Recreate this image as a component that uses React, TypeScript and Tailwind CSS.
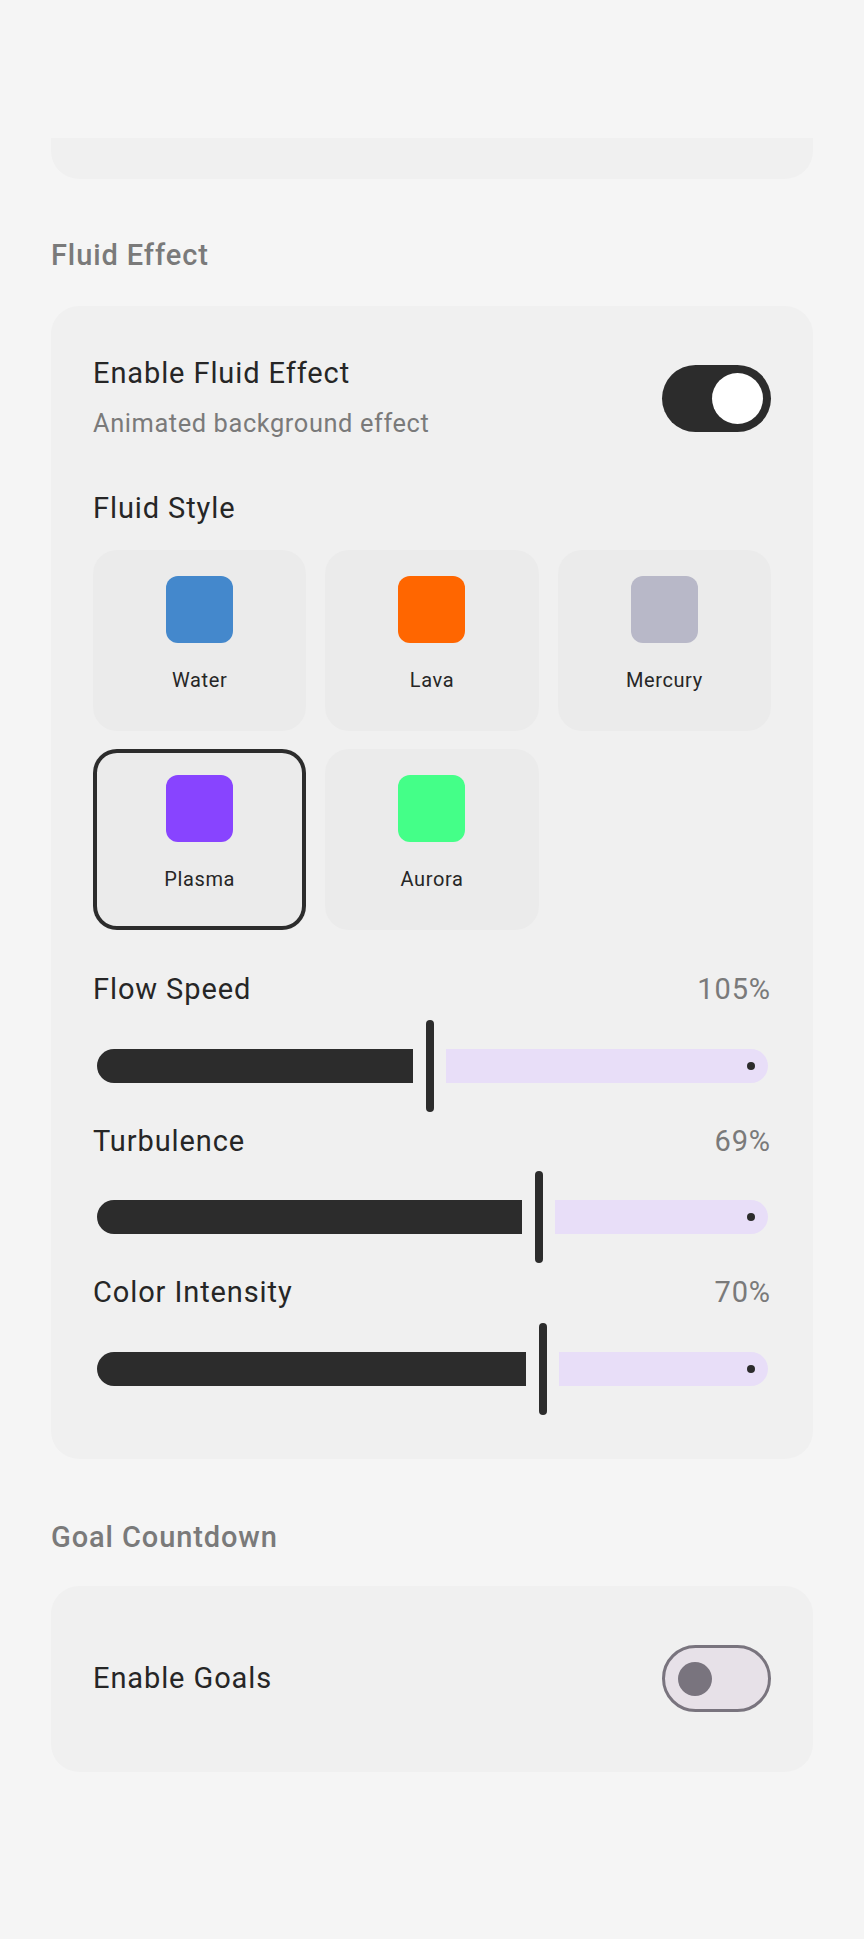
import React from "react";

type Style = { name: string; color: string };

const STYLES: Style[] = [
  { name: "Water", color: "#4488cc" },
  { name: "Lava", color: "#ff6600" },
  { name: "Mercury", color: "#b8b8c8" },
  { name: "Plasma", color: "#8844ff" },
  { name: "Aurora", color: "#44ff88" },
];

// active width in px of the dark part of each track
const SLIDERS = [
  { label: "Flow Speed", value: "105%", active: 316 },
  { label: "Turbulence", value: "69%", active: 425 },
  { label: "Color Intensity", value: "70%", active: 429 },
];

function Toggle({ on }: { on: boolean }) {
  if (on) {
    return (
      <div className="flex h-[67px] w-[109px] shrink-0 items-center justify-end rounded-full bg-[#2c2c2c] pr-[8px]">
        <div className="h-[51px] w-[51px] rounded-full bg-white" />
      </div>
    );
  }
  return (
    <div className="box-border flex h-[67px] w-[109px] shrink-0 items-center rounded-full border-[3.5px] border-[#79747e] bg-[#e7e1e8] pl-[13px]">
      <div className="h-[34px] w-[34px] rounded-full bg-[#79747e]" />
    </div>
  );
}

function Slider({ label, value, active }: { label: string; value: string; active: number }) {
  return (
    <div>
      <div className="flex items-center justify-between text-[29px] leading-[43.5px] tracking-[0.9px]">
        <span className="text-[#262626]">{label}</span>
        <span className="text-[#7a7a7a]">{value}</span>
      </div>
      <div className="flex h-[108px] items-center pl-[4px] pr-[3px]">
        <div
          className="h-[34px] shrink-0 rounded-l-full rounded-r-[4px] bg-[#2c2c2c]"
          style={{ width: active }}
        />
        <div className="mx-[12.5px] h-[92px] w-[8px] shrink-0 rounded-full bg-[#2c2c2c]" />
        <div className="flex h-[34px] flex-1 items-center justify-end rounded-l-[4px] rounded-r-full bg-[#e8def8] pr-[13px]">
          <div className="h-[8px] w-[8px] rounded-full bg-[#2c2c2c]" />
        </div>
      </div>
    </div>
  );
}

export default function App() {
  const selected = "Plasma";

  return (
    <div className="min-h-[1939px] bg-[#f5f5f5] px-[51px] pt-[138px] font-[Roboto,sans-serif]">
      {/* tail of the previous card, scrolled under the top */}
      <div className="h-[41px] rounded-b-[28px] bg-[#f0f0f0]" />

      <h2 className="mt-[56px] mb-[31px] text-[29px] font-medium leading-[40px] tracking-[0.9px] text-[#7a7a7a]">
        Fluid Effect
      </h2>

      <div className="rounded-[28px] bg-[#f0f0f0] px-[42px] pt-[46px] pb-[36px]">
        <div className="flex items-center justify-between">
          <div>
            <div className="text-[29px] leading-[43.5px] tracking-[0.9px] text-[#262626]">
              Enable Fluid Effect
            </div>
            <div className="mt-[9px] text-[25.4px] leading-[36px] tracking-[0.6px] text-[#7a7a7a]">
              Animated background effect
            </div>
          </div>
          <div className="mt-[4px]">
            <Toggle on />
          </div>
        </div>

        <div className="mt-[46px] text-[29px] leading-[43.5px] tracking-[0.9px] text-[#262626]">
          Fluid Style
        </div>

        <div className="mt-[20px] grid grid-cols-3 gap-x-[19px] gap-y-[18px]">
          {STYLES.map((s) => (
            <div
              key={s.name}
              className={`flex h-[181px] flex-col items-center rounded-[24px] bg-[#ebebeb] pt-[26px] ${
                s.name === selected ? "ring-4 ring-inset ring-[#2c2c2c]" : ""
              }`}
            >
              <div className="h-[67px] w-[67px] rounded-[12px]" style={{ backgroundColor: s.color }} />
              <div className="mt-[23px] text-[20px] leading-[29px] tracking-[0.6px] text-[#262626]">
                {s.name}
              </div>
            </div>
          ))}
        </div>

        <div className="mt-[38px]">
          {SLIDERS.map((s) => (
            <Slider key={s.label} {...s} />
          ))}
        </div>
      </div>

      <h2 className="mt-[58px] mb-[29px] text-[29px] font-medium leading-[40px] tracking-[0.9px] text-[#7a7a7a]">
        Goal Countdown
      </h2>

      <div className="flex h-[186px] items-center justify-between rounded-[28px] bg-[#f0f0f0] px-[42px]">
        <span className="text-[29px] leading-[43.5px] tracking-[0.9px] text-[#262626]">Enable Goals</span>
        <Toggle on={false} />
      </div>
    </div>
  );
}
